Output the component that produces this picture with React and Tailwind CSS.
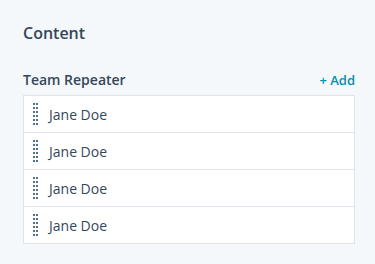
import React from 'react';

const items = ['Jane Doe', 'Jane Doe', 'Jane Doe', 'Jane Doe'];

// six rows of two dots, the drag handle on each row
const DragHandle = () => (
  <div className="grid grid-cols-2 gap-x-[1px] gap-y-[2px] w-[5px]">
    {Array.from({ length: 12 }).map((_, i) => (
      <span key={i} className="block w-[2px] h-[2px] bg-[#516f90]" />
    ))}
  </div>
);

const App = () => {
  return (
    <div
      className="w-[375px] h-[264px] bg-[#f5f8fa] pl-[23px] pr-[20px] pt-[22px] text-[#33475b]"
      style={{ fontFamily: '"Open Sans", Lato, sans-serif' }}
    >
      <h2 className="text-[16px] font-semibold leading-[22px]">Content</h2>

      <div className="mt-[27px] flex items-end justify-between h-[18px]">
        <span className="text-[14px] font-semibold leading-[18px]">Team Repeater</span>
        <button className="text-[13px] font-semibold leading-[18px] text-[#0091ae]">+ Add</button>
      </div>

      <ul className="mt-[6px] bg-white border border-[#dfe3eb]">
        {items.map((name, i) => (
          <li
            key={i}
            className={`box-content flex items-center h-[36px] pl-[9px] gap-[11px] ${i > 0 ? 'border-t border-[#dfe3eb]' : ''}`}
          >
            <DragHandle />
            <span className="text-[14px] leading-[18px] pt-[1px]">{name}</span>
          </li>
        ))}
      </ul>
    </div>
  );
};

export default App;
